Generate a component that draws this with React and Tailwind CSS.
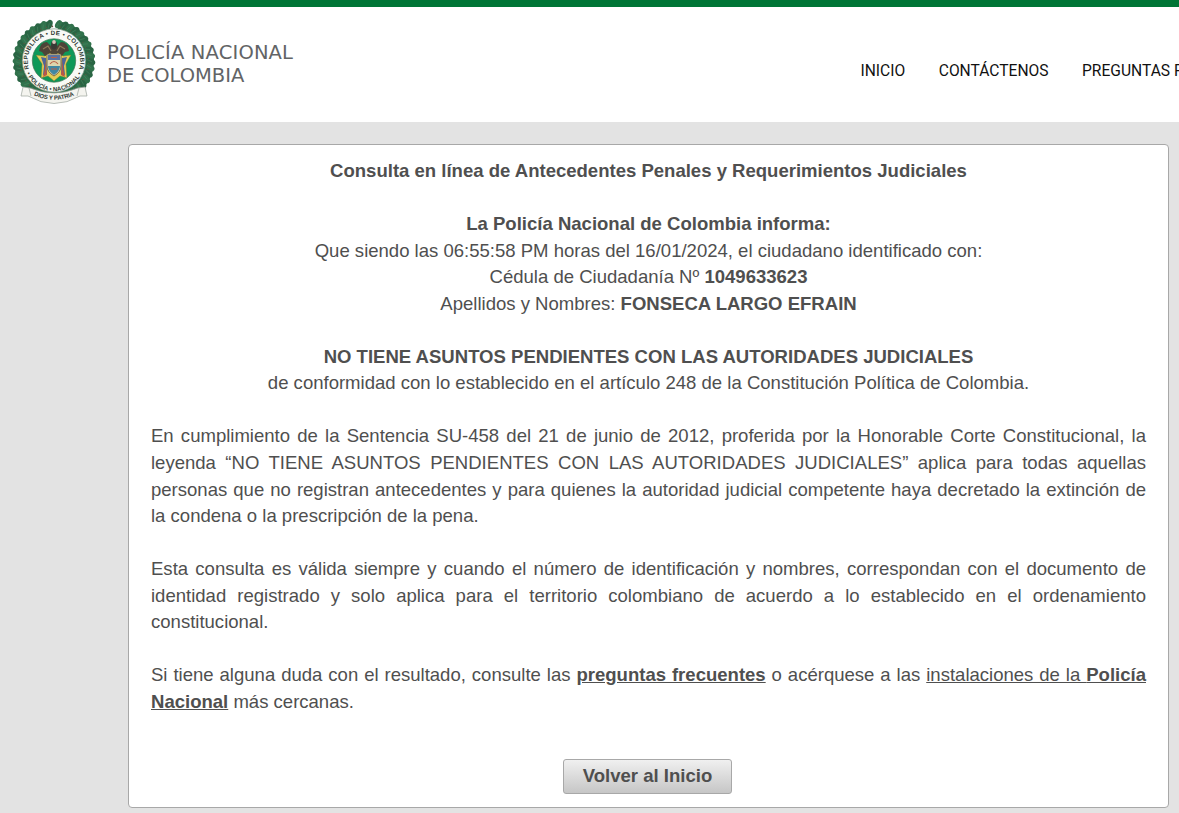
const LEAVES = Array.from({ length: 38 }, (_, i) => -83 + (i * 346) / 37);

function Crest() {
  return (
    <svg viewBox="0 0 90 90" className="h-[90px] w-[90px] shrink-0" aria-hidden="true">
      <defs>
        <path id="ring" d="M20 54A26.200 26.200 0 1 1 70 54" />
        <path id="ringLow" d="M17 57A30 30 0 0 0 73 57" />
        <path id="motto" d="M23 79.500Q45 90 67 79.500" />
      </defs>
      <circle cx="45" cy="46" r="35.500" fill="none" stroke="#2b6b46" strokeWidth="9" strokeDasharray="214 9.050" transform="rotate(-83 45 46)" />
      {LEAVES.map((angle, i) => (
        <g key={angle} transform={`rotate(${angle} 45 46)`}>
          <ellipse cx="82" cy="46" rx="4.500" ry="3" fill={i % 2 ? "#2a6544" : "#31724c"} transform="rotate(25 82 46)" />
          <path d="M78 44l5 2" stroke="#478560" strokeWidth=".6" />
          <circle cx="79.500" cy="48.500" r=".9" fill="#6a5540" />
        </g>
      ))}
      <path d="M14 72l7 1Q45 83 69 73l7-1 2 9-7 0Q45 96 19 81l-7 0z" fill="#f4f4ef" stroke="#9ba49c" strokeWidth=".7" />
      <path d="M20 73l2 8M70 73l-2 8" stroke="#9ba49c" strokeWidth=".7" />
      <circle cx="45" cy="45.500" r="31.700" fill="#f8faf6" stroke="#7d9383" strokeWidth=".7" />
      <circle cx="45" cy="45.500" r="21.700" fill="#0e9858" stroke="#427453" strokeWidth=".7" />
      <g fontFamily="'Liberation Sans', sans-serif" fontWeight="700" fill="#303a34">
        <text fontSize="6.200" textAnchor="middle">
          <textPath href="#ring" startOffset="50%" textLength="98">REPÚBLICA • DE • COLOMBIA</textPath>
        </text>
        <text fontSize="6" textAnchor="middle">
          <textPath href="#ringLow" startOffset="50%" textLength="69">• POLICÍA • NACIONAL •</textPath>
        </text>
        <text fontSize="6" textAnchor="middle">
          <textPath href="#motto" startOffset="50%" textLength="42">DIOS Y PATRIA</textPath>
        </text>
      </g>
      <path d="M27 40l9 1 9-10 9 10 8-1-5 9 1 14-7-2-6 5-6-5-7 2 1-14z" fill="#e4cd55" stroke="#647238" strokeWidth=".5" />
      <path d="M32 42l5 1 1 16-4 1 1-9z" fill="#4d669a" />
      <path d="M58 42l-5 1-1 16 4 1-1-9z" fill="#4d669a" />
      <path d="M36 45l2 15-4 2 2-8zM54 45l-2 15 4 2-2-8z" fill="#bd5742" />
      <path d="M30 36q1-9 8-9l5 5h4l5-5q7 0 8 9l-4 1-3 4-4-3-4 3-4-3-5 3-3-4z" fill="#4d4438" />
      <path d="M34 34l5-3 3 5M56 34l-5-3-3 5" fill="none" stroke="#8e7a58" strokeWidth="1.200" />
      <ellipse cx="45" cy="30" rx="3" ry="4.500" fill="#393a35" />
      <circle cx="45" cy="27" r="1.900" fill="#d8c6ba" />
      <path d="M38 39h14v12q0 6-7 10-7-4-7-10z" fill="#ddd6ae" stroke="#5b503a" strokeWidth=".8" />
      <path d="M39 40h12v5H39z" fill="#5a71a0" />
      <path d="M39 51h12q0 5-6 9-6-4-6-9z" fill="#4187a2" />
      <path d="M42 42.500h6M41 49q4-5 8 0M42 54h6" fill="none" stroke="#bd6047" strokeWidth="1.200" />
    </svg>
  );
}

export default function App() {
  return (
    <div className="flex h-[813px] w-full flex-col overflow-hidden bg-[#e3e3e3] font-['Liberation_Sans',Arial,sans-serif] text-[#4f4f4f]">
      <header className="flex h-[122px] shrink-0 justify-between overflow-hidden border-t-[7px] border-[#007536] bg-white">
        <div className="flex pl-[9px] pt-[8px]">
          <Crest />
          <div className="ml-2 mt-[26px] whitespace-nowrap font-['DejaVu_Sans',sans-serif] text-[19.500px] leading-[23px] text-[#626466]">
            <div className="tracking-[0.150px]">POLICÍA NACIONAL</div>
            <div>DE COLOMBIA</div>
          </div>
        </div>
        <nav className="flex w-[319px] shrink-0 gap-[33.500px] overflow-hidden whitespace-nowrap pl-[0.500px] pt-[52px] font-[Roboto,sans-serif] text-[15.600px] leading-6 text-[#111]">
          <a>INICIO</a>
          <a>CONTÁCTENOS</a>
          <a>PREGUNTAS FRECUENTES</a>
        </nav>
      </header>
      <main className="ml-[128px] mt-[22px] flex h-[664px] w-[1041px] shrink-0 flex-col rounded-[4px] border border-[#a8a8a8] bg-white px-[22px] pt-[13px] text-[18.550px] leading-[26.550px]">
        <div className="whitespace-nowrap text-center">
          <b>Consulta en línea de Antecedentes Penales y Requerimientos Judiciales</b>
          <br /><br />
          <b>La Policía Nacional de Colombia informa:</b>
          <br />
          Que siendo las 06:55:58 PM horas del 16/01/2024, el ciudadano identificado con:
          <br />
          Cédula de Ciudadanía Nº <b>1049633623</b>
          <br />
          Apellidos y Nombres: <b>FONSECA LARGO EFRAIN</b>
          <br /><br />
          <b>NO TIENE ASUNTOS PENDIENTES CON LAS AUTORIDADES JUDICIALES</b>
          <br />
          de conformidad con lo establecido en el artículo 248 de la Constitución Política de Colombia.
        </div>
        <p className="mt-[26.550px] text-justify">
          En cumplimiento de la Sentencia SU-458 del 21 de junio de 2012, proferida por la Honorable Corte Constitucional, la leyenda “NO TIENE ASUNTOS PENDIENTES CON LAS AUTORIDADES JUDICIALES” aplica para todas aquellas personas que no registran antecedentes y para quienes la autoridad judicial competente haya decretado la extinción de la condena o la prescripción de la pena.
        </p>
        <p className="mt-[26.550px] text-justify">
          Esta consulta es válida siempre y cuando el número de identificación y nombres, correspondan con el documento de identidad registrado y solo aplica para el territorio colombiano de acuerdo a lo establecido en el ordenamiento constitucional.
        </p>
        <p className="mt-[26.550px] text-justify">
          Si tiene alguna duda con el resultado, consulte las <a className="font-bold underline">preguntas frecuentes</a> o acérquese a las <a className="underline">instalaciones de la <b>Policía Nacional</b></a> más cercanas.
        </p>
        <button className="mr-[2px] mt-[44px] flex h-[35px] w-[169px] shrink-0 items-center justify-center self-center whitespace-nowrap rounded-[3px] border border-[#a8a8a8] bg-linear-to-b from-[#f0f0f0] to-[#c6c6c6] pb-[2px] text-[18.550px] font-bold">
          Volver al Inicio
        </button>
      </main>
    </div>
  );
}
